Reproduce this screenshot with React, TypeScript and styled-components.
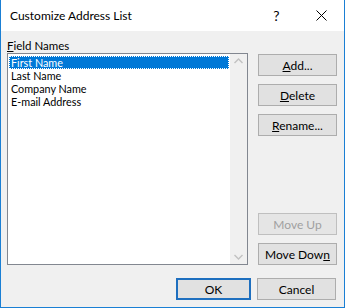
import React from 'react';
import styled, { createGlobalStyle } from 'styled-components';

const GlobalStyle = createGlobalStyle`
  html, body {
    margin: 0;
    padding: 0;
    background: #ffffff;
  }
  body {
    font-family: Lato, 'Noto Sans', sans-serif;
    font-size: 11.5px;
    color: #000000;
  }
`;

const Window = styled.div`
  width: 345px;
  height: 308px;
  box-sizing: border-box;
  border: 1px solid #1a7fd4;
  border-top: 0;
  display: flex;
  flex-direction: column;
  background: #f0f0f0;
`;

const TitleBar = styled.div`
  height: 31px;
  flex-shrink: 0;
  background: #ffffff;
  display: flex;
  align-items: center;
  padding-left: 9px;
  font-size: 12px;
`;

const Title = styled.div`
  flex: 1;
`;

const TitleButton = styled.div`
  width: 45px;
  height: 31px;
  display: flex;
  align-items: center;
  justify-content: center;
  font-size: 14px;
`;

const Body = styled.div`
  flex: 1;
  display: flex;
  flex-direction: column;
  padding: 7px 7px 0 6px;
`;

const Main = styled.div`
  display: grid;
  grid-template-columns: 241px 79px;
  column-gap: 10px;
`;

const Label = styled.div`
  grid-column: 1 / 3;
  height: 15px;
  line-height: 15px;
`;

const ListBox = styled.div`
  box-sizing: border-box;
  height: 212px;
  border: 1px solid #828790;
  background: #ffffff;
  display: flex;
`;

const Items = styled.div`
  flex: 1;
  padding: 2px 1px;
`;

const Item = styled.div<{ $selected?: boolean }>`
  height: 13px;
  line-height: 13px;
  font-size: 10.8px;
  padding-left: 2px;
  box-sizing: border-box;
  overflow: hidden;
  background: ${(p) => (p.$selected ? '#0078d7' : 'transparent')};
  color: ${(p) => (p.$selected ? '#ffffff' : '#000000')};
  outline: ${(p) => (p.$selected ? '1px dotted #ffffff' : 'none')};
  outline-offset: -1px;
`;

const ScrollBar = styled.div`
  width: 17px;
  background: #f0f0f0;
  display: flex;
  flex-direction: column;
  justify-content: space-between;
  align-items: center;
  padding: 4px 0;
  box-sizing: border-box;
`;

const ButtonColumn = styled.div`
  display: flex;
  flex-direction: column;
  gap: 8px;
  padding-top: 1px;
`;

const Spacer = styled.div`
  flex: 1;
`;

const Button = styled.button<{ $default?: boolean; $width?: number }>`
  box-sizing: border-box;
  width: ${(p) => (p.$width ? `${p.$width}px` : '79px')};
  height: 22px;
  padding: 0;
  font-family: inherit;
  font-size: 12px;
  color: #000000;
  background: #e1e1e1;
  border: ${(p) => (p.$default ? '2px solid #1e6fbf' : '1px solid #adadad')};
  &:disabled {
    color: #a0a0a0;
    border-color: #bfbfbf;
    background: #e5e5e5;
  }
`;

const Footer = styled.div`
  display: flex;
  justify-content: flex-end;
  gap: 6px;
  margin-top: 13px;
  padding-right: 1px;
`;

const Chevron = ({ up }: { up?: boolean }) => (
  <svg width="9" height="6" viewBox="0 0 9 6">
    <path
      d={up ? 'M0.5 5 L4.5 1 L8.5 5' : 'M0.5 1 L4.5 5 L8.5 1'}
      fill="none"
      stroke="#c2c2c2"
      strokeWidth="1.4"
    />
  </svg>
);

const fields = ['First Name', 'Last Name', 'Company Name', 'E-mail Address'];

export default function App() {
  return (
    <>
      <GlobalStyle />
      <Window>
        <TitleBar>
          <Title>Customize Address List</Title>
          <TitleButton>?</TitleButton>
          <TitleButton>
            <svg width="11" height="11" viewBox="0 0 11 11">
              <path d="M0.5 0.5 L10.5 10.5 M10.5 0.5 L0.5 10.5" stroke="#000" strokeWidth="1" />
            </svg>
          </TitleButton>
        </TitleBar>
        <Body>
          <Main>
            <Label>
              <u>F</u>ield Names
            </Label>
            <ListBox>
              <Items>
                {fields.map((f, i) => (
                  <Item key={f} $selected={i === 0}>
                    {f}
                  </Item>
                ))}
              </Items>
              <ScrollBar>
                <Chevron up />
                <Chevron />
              </ScrollBar>
            </ListBox>
            <ButtonColumn>
              <Button>
                <u>A</u>dd...
              </Button>
              <Button>
                <u>D</u>elete
              </Button>
              <Button>
                <u>R</u>ename...
              </Button>
              <Spacer />
              <Button disabled>Move Up</Button>
              <Button>
                Move Dow<u>n</u>
              </Button>
            </ButtonColumn>
          </Main>
          <Footer>
            <Button $default $width={75}>OK</Button>
            <Button>Cancel</Button>
          </Footer>
        </Body>
      </Window>
    </>
  );
}
